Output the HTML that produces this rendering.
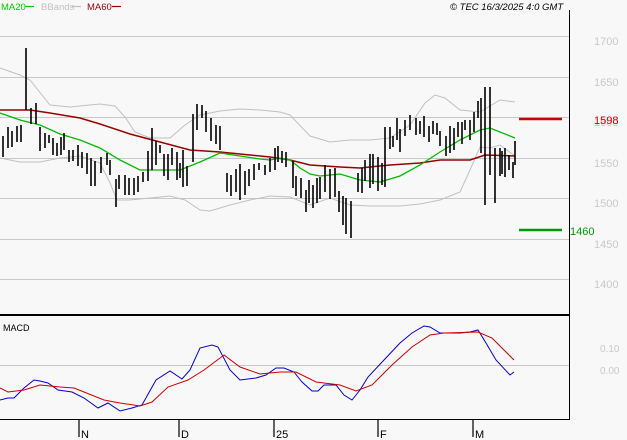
<!DOCTYPE html>
<html><head><meta charset="utf-8"><style>
html,body{margin:0;padding:0;background:#f8f8f8;}
svg{display:block;font-family:"Liberation Sans",sans-serif;}
</style></head><body>
<svg width="627" height="440" viewBox="0 0 627 440" xmlns="http://www.w3.org/2000/svg">
<rect width="627" height="440" fill="#f8f8f8"/>
<g stroke="#c8c8c8" stroke-width="1">
<path d="M0 36.5H569M0 77.5H569M0 117.5H569M0 158.5H569M0 198.5H569M0 239.5H569M0 279.5H569M0 365.5H569"/>
</g>
<g font-size="11" fill="#c8c8c8">
<text x="594" y="45">1700</text><text x="594" y="86">1650</text><text x="594" y="126">1600</text>
<text x="594" y="167">1550</text><text x="594" y="207">1500</text><text x="594" y="248">1450</text><text x="594" y="288">1400</text>
<text x="600" y="352" font-size="10">0.10</text><text x="600" y="374" font-size="10">0.00</text>
</g>
<g fill="none" stroke="#c0c0c0" stroke-width="1">
<polyline points="0,68 20,75 30,80 50,105 70,107 90,105 100,104 115,106 125,117 135,132 150,138 170,138 185,125 200,115 220,111 240,109 260,110 280,112 290,115 310,136 330,142 350,140 370,140 390,138 410,125 425,103 435,95 445,98 460,110 480,112 500,100 515,102"/>
<polyline points="0,158 20,162 40,162 60,158 80,156 100,163 110,183 117,200 130,200 150,198 170,196 185,200 200,210 210,211 230,205 250,200 270,196 290,197 310,205 330,198 350,205 370,206 400,206 420,204 440,200 460,192 470,170 480,147 490,148 500,145 515,156"/>
</g>
<polyline fill="none" stroke="#990000" stroke-width="1.5" points="0,110 30,110 50,113 80,118 100,124 130,134 160,142 190,150 220,152 250,155 270,157 290,160 310,165 340,167 360,168 390,165 420,163 440,160 470,160 485,155 515,156"/>
<polyline fill="none" stroke="#00bb00" stroke-width="1.3" points="0,113 20,120 40,125 60,134 80,140 100,148 120,160 140,170 160,170 180,170 200,162 220,153 240,156 260,159 270,160 280,158 290,160 300,168 310,174 320,176 340,174 360,180 380,182 400,176 420,165 440,152 460,140 480,130 490,128 515,138"/>
<path stroke="#000" stroke-width="1.6" fill="none" d="M3 136V157M8 127V148M12 131V147M17 126V142M21 125V142M26 48V110M31 108V124M36 103V124M40 127V151M45 133V148M49 135V143M53 138V155M57 143V156M61 137V155M64 133V150M69 150V162M73 150V161M78 145V166M82 152V168M87 153V174M91 158V186M95 161V186M101 157V173M107 153V165M110 160V175M116 179V207M119 175V189M125 175V195M129 178V195M134 178V195M138 176V192M143 172V182M148 151V181M152 128V170M156 141V165M160 145V153M164 154V176M168 154V180M172 148V165M177 152V180M180 163V178M183 150V187M187 166V186M193 114V162M197 104V130M202 105V118M206 111V132M211 118V141M216 125V144M220 126V150M227 173V192M231 175V196M236 169V192M240 164V200M245 171V195M249 169V186M254 164V180M259 163V170M265 165V175M270 158V172M275 148V170M278 146V162M282 151V163M286 152V167M293 161V188M296 176V196M301 178V198M306 190V212M309 180V203M313 185V208M317 178V203M320 177V199M325 165V192M330 169V199M335 168V197M339 191V212M343 196V225M346 198V234M351 201V238M358 173V192M362 168V193M365 160V181M370 154V188M373 154V184M378 157V191M382 163V185M385 127V187M390 127V149M393 136V147M397 118V140M400 129V152M405 120V136M410 115V130M416 118V135M420 121V134M424 116V137M429 126V142M433 121V134M437 123V135M440 131V146M446 136V156M450 126V153M454 128V150M458 122V137M462 122V144M465 120V130M470 120V140M474 112V132M478 101V118M481 98V153M485 87V205M490 87V175M495 148V203M500 148V176M502 151V174M505 148V177M509 155V170M513 162V178M515 141V165"/>
<path d="M519 119H562" stroke="#cc0000" stroke-width="2.5"/>
<path d="M519 230H562" stroke="#009900" stroke-width="2.5"/>
<text x="594" y="124" font-size="11" fill="#cc0000">1598</text>
<text x="570" y="235" font-size="11" fill="#009900">1460</text>
<path d="M569.5 10V419.5H0" stroke="#000" stroke-width="1" fill="none"/>
<path d="M0 315H569" stroke="#000" stroke-width="2"/>
<text x="3" y="331" font-size="9" fill="#000">MACD</text>
<polyline fill="none" stroke="#0000cc" stroke-width="1" points="0,400 8,398 14,398 24,388 34,380 40,381 48,383 58,390 72,392 84,398 98,408 108,403 120,411 132,408 142,405 156,380 170,371 182,379 190,370 200,348 212,345 218,347 230,370 240,380 256,378 266,375 276,368 284,368 294,372 302,382 312,391 318,391 324,385 336,385 344,395 352,400 360,390 368,377 384,360 400,343 412,333 424,326 430,327 440,333 460,333 470,332 478,330 486,343 496,360 510,375 514,372"/>
<polyline fill="none" stroke="#cc0000" stroke-width="1" points="0,388 8,392 24,390 40,385 60,387 74,388 84,392 104,400 120,403 140,406 152,402 168,387 188,380 204,370 224,355 240,367 260,374 280,372 296,372 316,382 340,385 356,391 372,385 392,365 412,347 430,335 444,333 478,332 492,338 514,360"/>
<g stroke="#000" stroke-width="1.2"><path d="M79 420V437M179 420V437M274 420V437M378 420V437M473 420V437"/></g>
<g font-size="11" fill="#000"><text x="81" y="438">N</text><text x="181" y="438">D</text><text x="276" y="438">25</text><text x="380" y="438">F</text><text x="475" y="438">M</text></g>
<g font-size="9.5">
<text x="1" y="10" fill="#00cc00">MA20</text><path d="M25 6.5H34" stroke="#00cc00" stroke-width="1.2"/>
<text x="41" y="10" fill="#c0c0c0">BBands</text><path d="M72 6.5H81" stroke="#c0c0c0" stroke-width="1.2"/>
<text x="87" y="10" fill="#990000">MA60</text><path d="M112 6.5H121" stroke="#990000" stroke-width="1.2"/>
<text x="450" y="10" fill="#000" font-style="italic">© TEC 16/3/2025 4:0 GMT</text>
</g>
</svg>
</body></html>
